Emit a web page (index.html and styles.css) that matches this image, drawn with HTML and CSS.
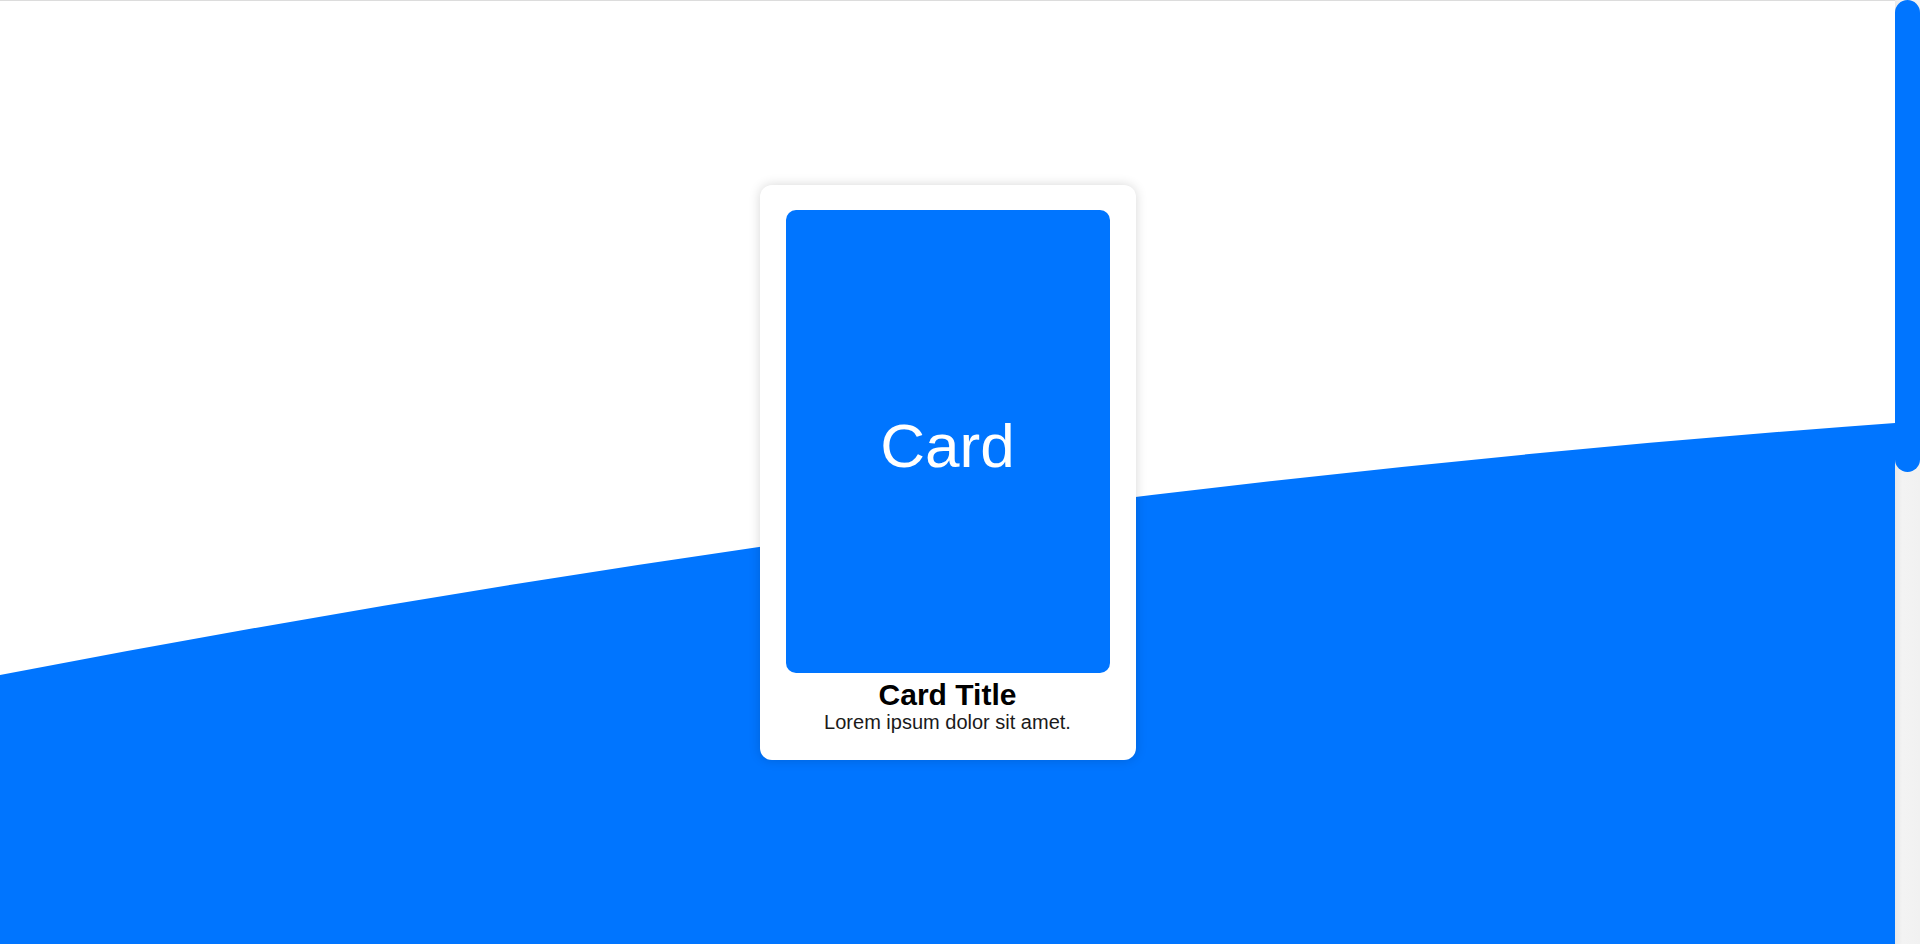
FILE: index.html
```html
<!DOCTYPE html>
<html lang="en">
<head>
<meta charset="utf-8">
<title>Card</title>
<link rel="stylesheet" href="styles.css">
</head>
<body>
  <main class="page">
    <section class="hero">
      <svg class="wave" viewBox="0 0 1895 944" preserveAspectRatio="none" aria-hidden="true">
        <path d="M0,675 Q947.5,492.6 1895,423 L1895,944 L0,944 Z" fill="#0075ff"/>
      </svg>
      <div class="card">
        <div class="card-image"><span>Card</span></div>
        <h2 class="card-title">Card Title</h2>
        <p class="card-text">Lorem ipsum dolor sit amet.</p>
      </div>
    </section>
    <section class="below"></section>
  </main>
  <div class="scrollbar" aria-hidden="true">
    <div class="scrollbar-thumb"></div>
  </div>
</body>
</html>
```

FILE: styles.css
```css
html, body {
  margin: 0;
  padding: 0;
  height: 100%;
}

body {
  font-family: "Liberation Sans", Arial, sans-serif;
  background: #ffffff;
  display: flex;
  overflow: hidden;
}

.page {
  flex: 1;
  min-width: 0;
  height: 100vh;
  overflow-y: auto;
  scrollbar-width: none;
}

.page::-webkit-scrollbar {
  display: none;
}

.scrollbar {
  width: 25px;
  flex: none;
  height: 100vh;
  background: linear-gradient(to right, #e9e9e9, #f3f3f3 30%, #f1f1f1);
}

.scrollbar-thumb {
  height: 472px;
  background: #0075ff;
  border-radius: 13px;
}

.hero {
  position: relative;
  height: 100vh;
  box-sizing: border-box;
  border-top: 1px solid #dcdcdc;
  background: #ffffff;
  display: flex;
  align-items: center;
  justify-content: center;
  overflow: hidden;
}

.wave {
  position: absolute;
  left: 0;
  top: -1px;
  width: 100%;
  height: 100vh;
  display: block;
}

.card {
  position: relative;
  z-index: 1;
  width: 324px;
  padding: 25px 26px 26px;
  background: #ffffff;
  border-radius: 12px;
  box-shadow: 0 0 12px rgba(0, 0, 0, 0.16);
  text-align: center;
}

.card-image {
  height: 463px;
  background: #0075ff;
  border-radius: 10px;
  display: flex;
  align-items: center;
  justify-content: center;
  color: #ffffff;
  font-size: 62px;
}

.card-image span {
  margin-top: 8px;
}

.card-title {
  margin: 5px 0 0;
  font-size: 30px;
  font-weight: bold;
  color: #000000;
  line-height: 33px;
}

.card-text {
  margin: 0;
  font-size: 20px;
  line-height: 23px;
  color: #1a1a1a;
}

.below {
  height: 100vh;
  background: #0075ff;
}
```
